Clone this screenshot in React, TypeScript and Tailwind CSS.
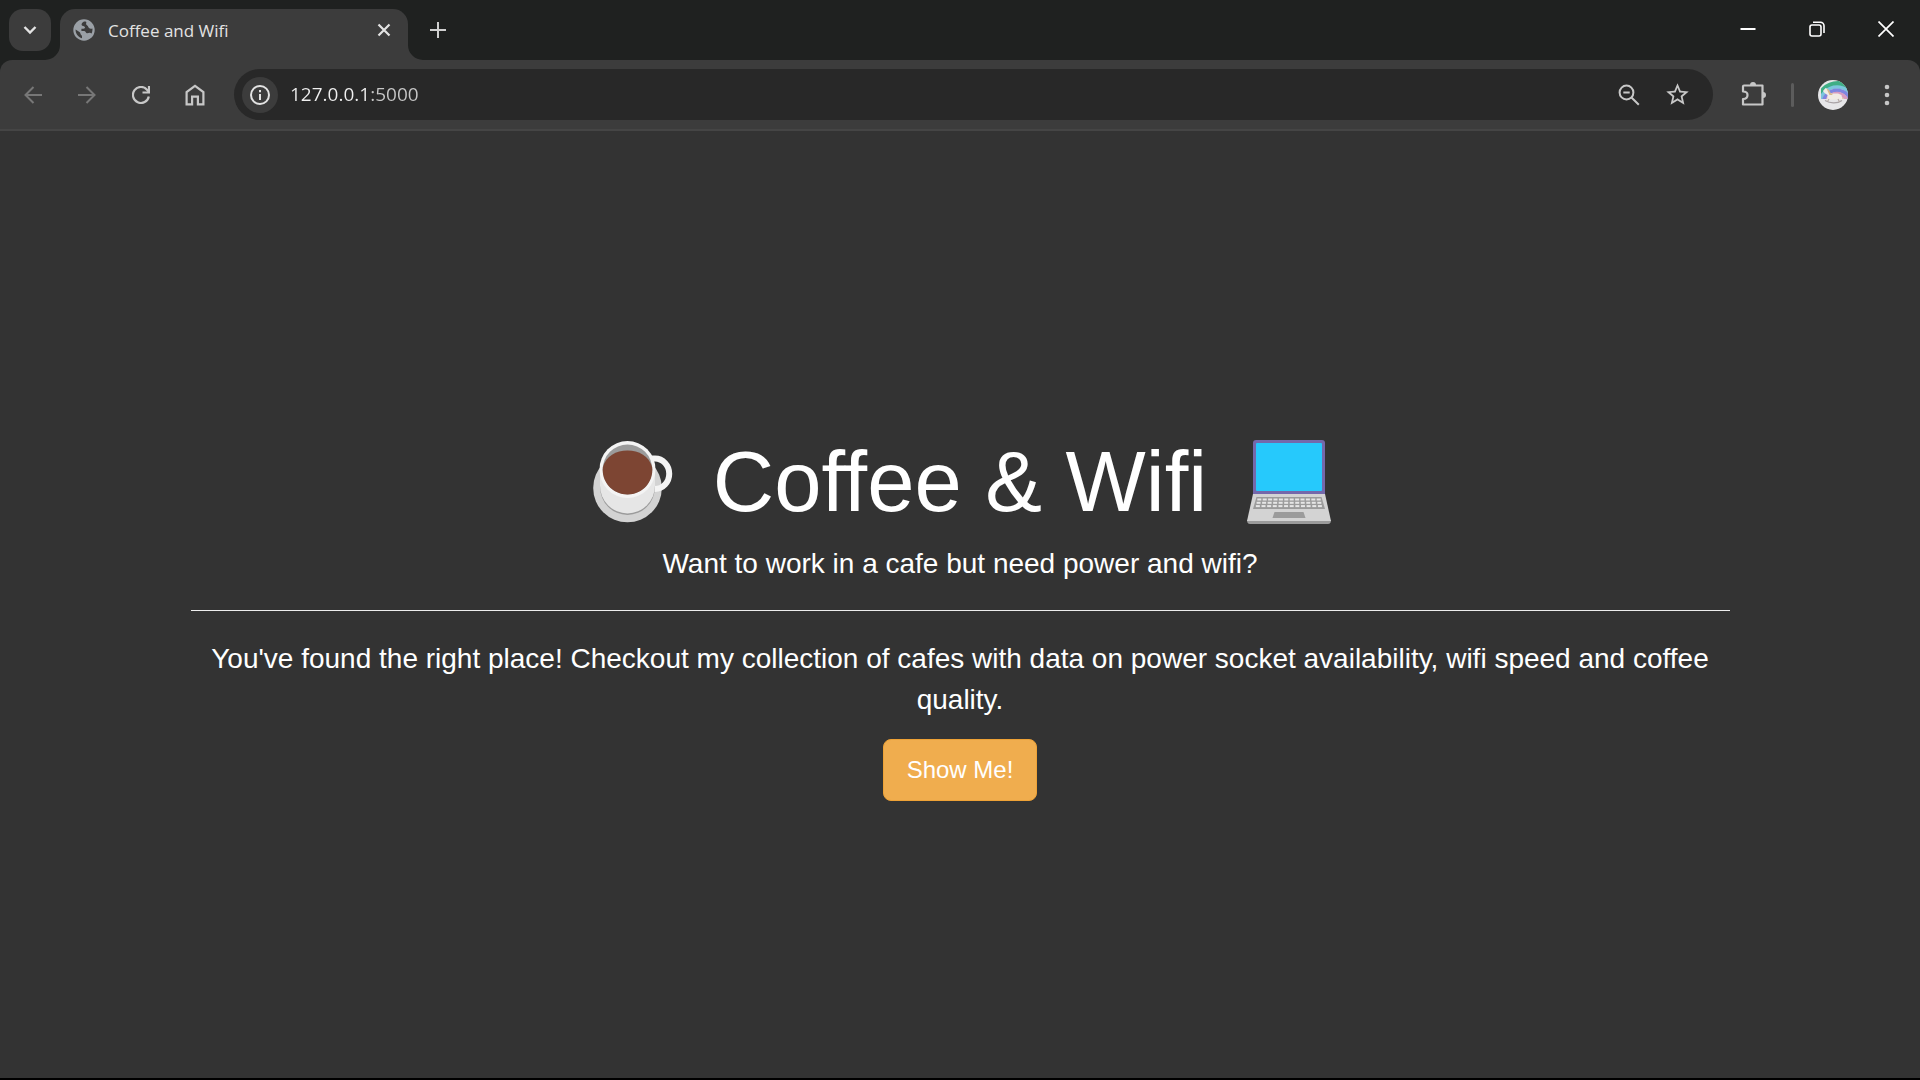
import React from "react";

function GlobeIcon() {
  return (
    <svg viewBox="0 0 22 22" className="size-[22px] shrink-0" aria-hidden="true">
      <circle cx="11" cy="11" r="10.7" fill="#9aa0a6" />
      <path
        d="M11 2.6 C9.4 3.6 8.4 4.6 8.6 6 C9 7.4 11.6 6.6 12 8.2 C12.2 9.4 10.8 9.8 9.4 9.8 H8.4 V12 H11 C12.8 12.2 12.6 13.6 13.8 14.2 C14.8 14.6 15.8 13.6 17 13.8 L18.6 14.4 C19.4 12.6 19.6 10.8 19.4 9.4 C18.4 9.8 17 10 16 9 C15 8 15.4 7 14.2 6.4 C12.8 5.8 13 4.6 13.4 3 C12.6 2.6 11.8 2.5 11 2.6 Z"
        fill="#3c3c3c"
      />
      <path
        d="M2.6 10.6 C2.4 14.6 5.2 18.4 9 19.2 V17.2 C9 16 7.4 16 7.4 14.6 C7.4 13 5.4 12.8 2.6 10.6 Z"
        fill="#3c3c3c"
      />
    </svg>
  );
}

function TabFoot({ flip = false }: { flip?: boolean }) {
  return (
    <svg
      viewBox="0 0 15 15"
      className={flip ? "size-[15px] shrink-0 -scale-x-100" : "size-[15px] shrink-0"}
      aria-hidden="true"
    >
      <path d="M0 15 A15 15 0 0 0 15 0 V15 Z" fill="#3c3c3c" />
    </svg>
  );
}

function Avatar() {
  return (
    <svg viewBox="0 0 30 30" className="size-[30px]" aria-hidden="true">
      <defs>
        <clipPath id="avatar-clip">
          <circle cx="15" cy="15" r="15" />
        </clipPath>
        <clipPath id="rainbow-clip">
          <rect x="3" y="0" width="27" height="19" />
        </clipPath>
      </defs>
      <g clipPath="url(#avatar-clip)">
        <rect width="30" height="30" fill="#e6e6e8" />
        <g clipPath="url(#rainbow-clip)" fill="none" strokeWidth="3.6">
          <circle cx="20" cy="24" r="20" stroke="#3fae85" strokeWidth="6" />
          <circle cx="19" cy="24" r="17" stroke="#7cc6dc" />
          <circle cx="19" cy="24" r="13.8" stroke="#7f86e0" />
          <circle cx="19" cy="24" r="10.4" stroke="#d79bc0" />
          <circle cx="19" cy="24" r="7" stroke="#dfc3a8" />
        </g>
        <path
          d="M5 11 L7.500 8 L9.500 9 L12.500 13.500 H20 L23.500 15 L24.500 20 L22 19 L18 19.500 H13 L9 21 L9.500 15 L6.500 13 Z"
          fill="#f1ebe4"
        />
        <path d="M8.500 8.500 L10.500 9.500 L13 13.500 H15 L14 15 H11.500 Z" fill="#d9b98c" />
        <path d="M7 20.500 C12 23.500 19 24 24 20.500" fill="none" stroke="#a9a3a6" strokeWidth="1.300" />
        <path d="M11 19 L9.500 21.500 M20 19 L21.500 22" stroke="#b9aca6" strokeWidth="1.200" />
      </g>
    </svg>
  );
}

function CoffeeIcon() {
  return (
    <svg viewBox="0 0 80 82" className="h-[82px] w-20 shrink-0" role="img" aria-label="Coffee">
      <circle cx="34.500" cy="47" r="34.300" fill="#d3d3d3" />
      <path
        d="M58 17.500 H62 A14 15 0 0 1 62 48 H58"
        fill="none"
        stroke="#f4f4f4"
        strokeWidth="6"
      />
      <path d="M7 30 V46 A27.500 28 0 0 0 62 46 V30 Z" fill="#9b9b9b" />
      <path d="M7 28 V44.500 A27.500 28 0 0 0 62 44.500 V28 Z" fill="#e6e6e6" />
      <ellipse cx="34.500" cy="28.500" rx="28" ry="28.500" fill="#f4f4f4" />
      <ellipse cx="34.500" cy="28.500" rx="24.800" ry="25" fill="#9b9b9b" />
      <path
        d="M9.900 26 C13 15 23 9.500 34.500 9.500 C46 9.500 56 15 59.100 26 C61 41 49 53.500 34.500 53.500 C20 53.500 8 41 9.900 26 Z"
        fill="#7d4533"
      />
    </svg>
  );
}

function LaptopIcon() {
  const keyRows = [59.5, 62.8, 66.1];
  return (
    <svg viewBox="0 0 84 84" className="size-[84px] shrink-0" role="img" aria-label="Laptop">
      <path d="M6 55 V3 Q6 0 9 0 H75 Q78 0 78 3 V55 Z" fill="#7468ab" />
      <rect x="9" y="3" width="66" height="48" rx="1" fill="#26c9fc" />
      <path d="M0 80 H84 Q84 84 81 84 H3 Q0 84 0 80 Z" fill="#9b9b9b" />
      <path d="M6 54 H78 L84 81 H0 Z" fill="#d3d3d3" />
      <path d="M9.500 57 H74.500 L78 69 H6 Z" fill="#9b9b9b" />
      {keyRows.map((y, row) =>
        Array.from({ length: 12 }, (_, i) => {
          const step = 5.4 + row * 0.12;
          const start = 42 - step * 6 + 0.7;
          return <rect key={`${row}-${i}`} x={start + i * step} y={y - 1} width="4" height="2" fill="#e6e6e6" />;
        })
      )}
      <path d="M27.500 72 H56.500 L58.500 78 H25.500 Z" fill="#9b9b9b" />
    </svg>
  );
}

const toolButton = "flex w-[54px] items-center justify-center";

export default function App() {
  return (
    <div className="flex min-h-screen flex-col border-b-2 border-black bg-[#333333] font-['Liberation_Sans',Arial,sans-serif] text-white">
      <header className="bg-[#1f2120] font-['Open_Sans','Noto_Sans',sans-serif]">
        <div className="flex h-[60px] items-start">
          <button
            type="button"
            aria-label="Search tabs"
            className="mt-[9px] ml-[9px] flex size-[42px] shrink-0 items-center justify-center rounded-[14px] bg-[#3c3c3c]"
          >
            <svg viewBox="0 0 14 14" className="size-[14px]" fill="none" stroke="#e3e3e3" strokeWidth="2.400" aria-hidden="true">
              <path d="M1.500 4 L7 9.500 L12.500 4" />
            </svg>
          </button>
          <div className="-ml-[6px] flex h-[60px] items-end">
            <TabFoot />
            <div className="flex h-[51px] w-[348px] items-center gap-[13px] rounded-t-[15px] bg-[#3c3c3c] pr-3 pb-[9px] pl-[13px]">
              <GlobeIcon />
              <span className="flex-1 pt-[2px] text-[17px] leading-6 text-[#e3e3e3]">Coffee and Wifi</span>
              <button type="button" aria-label="Close tab" className="flex size-6 items-center justify-center">
                <svg viewBox="0 0 14 14" className="size-[14px]" stroke="#e3e3e3" strokeWidth="2.200" aria-hidden="true">
                  <path d="M1.500 1.500 L12.500 12.500 M12.500 1.500 L1.500 12.500" />
                </svg>
              </button>
            </div>
            <TabFoot flip />
          </div>
          <button type="button" aria-label="New tab" className="flex h-[60px] w-[30px] items-center justify-center">
            <svg viewBox="0 0 16 16" className="size-4" stroke="#d0d0d0" strokeWidth="2" aria-hidden="true">
              <path d="M8 0 V16 M0 8 H16" />
            </svg>
          </button>
          <div className="ml-auto flex h-[58px]">
            <button type="button" aria-label="Minimize" className="flex w-[69px] items-center justify-center">
              <svg viewBox="0 0 16 16" className="size-4" stroke="#ffffff" strokeWidth="2" aria-hidden="true">
                <path d="M0.500 8 H15.500" />
              </svg>
            </button>
            <button type="button" aria-label="Restore" className="flex w-[69px] items-center justify-center">
              <svg viewBox="0 0 16 16" className="size-4" fill="none" stroke="#ffffff" strokeWidth="1.600" aria-hidden="true">
                <rect x="1" y="4" width="11" height="11" rx="2" />
                <path d="M4 1.200 H11.500 A3.500 3.500 0 0 1 15 4.700 V12" />
              </svg>
            </button>
            <button type="button" aria-label="Close window" className="flex w-[69px] items-center justify-center">
              <svg viewBox="0 0 16 16" className="size-4" stroke="#ffffff" strokeWidth="1.700" aria-hidden="true">
                <path d="M0.500 0.500 L15.500 15.500 M15.500 0.500 L0.500 15.500" />
              </svg>
            </button>
          </div>
        </div>

        <div className="flex items-stretch rounded-t-[12px] border-b-2 border-[#454545] bg-[#3c3c3c] pt-[9px] pb-[9px] pl-[6px]">
          <button type="button" aria-label="Back" className={toolButton}>
            <svg viewBox="0 0 18 18" className="size-[18px]" fill="none" stroke="#777777" strokeWidth="2" aria-hidden="true">
              <path d="M18 9 H1.500 M9.500 1 L1.500 9 L9.500 17" />
            </svg>
          </button>
          <button type="button" aria-label="Forward" className={toolButton}>
            <svg viewBox="0 0 18 18" className="size-[18px]" fill="none" stroke="#777777" strokeWidth="2" aria-hidden="true">
              <path d="M0 9 H16.500 M8.500 1 L16.500 9 L8.500 17" />
            </svg>
          </button>
          <button type="button" aria-label="Reload" className={toolButton}>
            <svg viewBox="0 0 18 18" className="size-[18px]" fill="none" stroke="#c7c7c7" strokeWidth="2.200" aria-hidden="true">
              <path d="M16.800 10.500 A8 8 0 1 1 15 3.700 L16.500 5.500" />
              <path d="M10.500 6.500 H17 V0" />
            </svg>
          </button>
          <button type="button" aria-label="Home" className={toolButton}>
            <svg viewBox="0 0 20 22" className="h-[22px] w-5" fill="none" stroke="#c7c7c7" strokeWidth="2.200" aria-hidden="true">
              <path d="M1.600 20.400 V8 L10 1.800 L18.400 8 V20.400 H12.900 V12.600 H7.100 V20.400 Z" />
            </svg>
          </button>

          <div className="ml-3 flex h-[51px] flex-1 items-center rounded-full bg-[#282828] pr-3 pl-2">
            <button
              type="button"
              aria-label="View site information"
              className="flex size-9 shrink-0 items-center justify-center rounded-full bg-[#3c3c3c]"
            >
              <svg viewBox="0 0 20 20" className="size-5" fill="none" stroke="#e3e3e3" strokeWidth="2" aria-hidden="true">
                <circle cx="10" cy="10" r="9" />
                <path d="M10 9 V15 M10 5 V7.200" />
              </svg>
            </button>
            <input
              type="text"
              aria-label="Address"
              defaultValue="127.0.0.1:5000"
              className="ml-3 min-w-0 flex-1 bg-linear-to-r from-[#f0f0f0] from-[80px] to-[#c7c7c7] to-[80px] bg-clip-text pb-[2px] text-[19px] leading-7 text-transparent caret-white outline-none"
            />
            <button type="button" aria-label="Zoom" className="flex w-12 items-center justify-center">
              <svg viewBox="0 0 22 22" className="size-[22px]" fill="none" stroke="#c7c7c7" strokeWidth="2" aria-hidden="true">
                <circle cx="8.500" cy="8.500" r="6.900" />
                <path d="M13.500 13.500 L20.800 20.800 M5.300 8.500 H11.700" />
              </svg>
            </button>
            <button type="button" aria-label="Bookmark this page" className="flex w-12 items-center justify-center">
              <svg viewBox="0 0 24 24" className="size-[27px]" fill="#c7c7c7" aria-hidden="true">
                <path d="M22 9.240l-7.190-.62L12 2 9.190 8.630 2 9.240l5.460 4.730L5.820 21 12 17.270 18.180 21l-1.630-7.030L22 9.240zM12 15.400l-3.760 2.270 1-4.280-3.320-2.880 4.380-.38L12 6.100l1.710 4.040 4.380.38-3.320 2.880 1 4.280L12 15.400z" />
              </svg>
            </button>
          </div>

          <button type="button" aria-label="Extensions" className="ml-[14px] flex w-[54px] items-center justify-center">
            <svg viewBox="0 0 26 26" className="size-[26px]" aria-hidden="true">
              <path
                d="M3 3.500 H21.500 V22.500 H2 V17 C5.500 17 6.500 15 6.500 13 C6.500 11 5 9.500 2 9.500 V4.500 Q2 3.500 3 3.500 Z"
                fill="none"
                stroke="#c7c7c7"
                strokeWidth="2.200"
                strokeLinejoin="round"
              />
              <path d="M9 3 A3 3 0 0 1 15 3 Z M22 10 A3 3 0 0 1 22 16 Z" fill="#c7c7c7" />
            </svg>
          </button>
          <span className="ml-[10px] h-6 w-[3px] self-center rounded-full bg-[#5c5c5c]" />
          <button type="button" aria-label="Profile" className="ml-3 flex w-[54px] items-center justify-center">
            <Avatar />
          </button>
          <button type="button" aria-label="Menu" className="mr-[6px] flex w-[54px] items-center justify-center">
            <svg viewBox="0 0 6 22" className="h-[22px] w-[6px]" fill="#c7c7c7" aria-hidden="true">
              <circle cx="3" cy="3" r="2.300" />
              <circle cx="3" cy="11" r="2.300" />
              <circle cx="3" cy="19" r="2.300" />
            </svg>
          </button>
        </div>
      </header>

      <main className="mx-auto flex w-full max-w-[1539px] flex-1 flex-col items-center justify-center pt-[22px] text-center">
        <h1 className="mb-[9px] flex items-center pl-1 text-[85px] leading-[104px]">
          <CoffeeIcon />
          <span className="mx-10">Coffee &amp; Wifi</span>
          <LaptopIcon />
        </h1>
        <p className="text-[28px] leading-[41px]">Want to work in a cafe but need power and wifi?</p>
        <hr className="mt-[26px] mb-[27px] w-full border-[#eeeeee]" />
        <p className="mb-[19px] text-[28px] leading-[41px]">
          You've found the right place! Checkout my collection of cafes with data on power socket availability, wifi
          speed and coffee quality.
        </p>
        <a
          href="#cafes"
          className="rounded-lg border border-[#eea236] bg-[#f0ad4e] px-[23px] py-3 text-[24px] leading-9 text-white"
        >
          Show Me!
        </a>
      </main>
    </div>
  );
}
